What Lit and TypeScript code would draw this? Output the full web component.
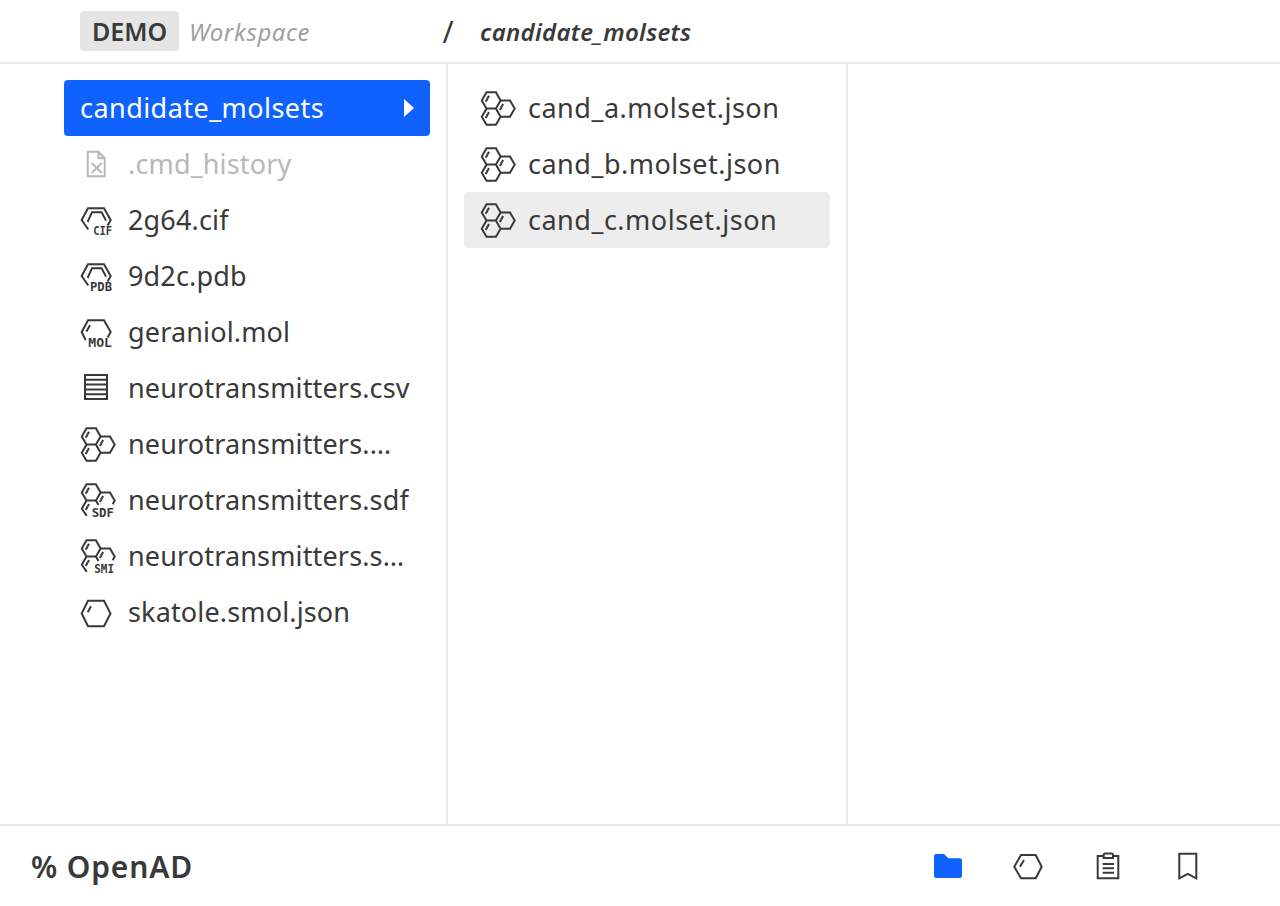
import { LitElement, html, css, svg } from "lit";
import { customElement } from "lit/decorators.js";

const R = 9.4, H = 8.14;
const hex = (cx: number, cy: number) =>
  `M${cx - R},${cy}L${cx - R / 2},${cy - H}L${cx + R / 2},${cy - H}L${cx + R},${cy}L${cx + R / 2},${cy + H}L${cx - R / 2},${cy + H}Z`;
const bond = (cx: number, cy: number) => `M${cx - 5.5},${cy + 1.3}L${cx - 2.2},${cy - 4.7}`;
const A = [13.2, 10.4], B = [27.3, 18.6], C = [13.2, 26.7];

const label = (t: string, x: number, w: number, y = 33.3) => svg`<text class="lab" x=${x} y=${y} textLength=${w} lengthAdjust="spacingAndGlyphs">${t}</text>`;
const ico = (body: unknown) => html`<svg class="ico" viewBox="0 0 36 36" width="36" height="36" fill="none" stroke="currentColor" stroke-width="2">${body}</svg>`;

const molset = svg`<path d="${hex(A[0], A[1])} ${hex(B[0], B[1])} ${hex(C[0], C[1])} ${bond(A[0], A[1])} ${bond(B[0], B[1])} ${bond(C[0], C[1])}"/>`;
const molsetCut = svg`<path d="${hex(A[0], A[1])}"/><path d="${bond(A[0], A[1])} ${bond(B[0], B[1])} ${bond(C[0], C[1])}"/><path d="M${B[0] - R / 2},${B[1] - H}H${B[0] + R / 2}L${B[0] + R},${B[1]}L${B[0] + R - 2},${B[1] + 3.6}M${B[0] - R},${B[1]}L${B[0] - R + 2.6},${B[1] + 4.4}"/><path d="M${C[0] - R + 5},${C[1] + H - 1}L${C[0] - R},${C[1]}L${C[0] - R / 2},${C[1] - H}"/>`;
const ringOpen = svg`<path d="M10.3,27.5L3.7,18L10,6.3H26L32.7,18L29.6,23.6"/><path d="M9.6,20L14,10.2H23.6L28,18.6" />`;

const icons: Record<string, unknown> = {
  cmd: ico(svg`<path d="M9.7,5.7H20.5L26.7,12.2V30.3H9.7Z M20.5,5.7V12.2H26.7"/><path d="M13.7,17L23.7,27M23.7,17L13.7,27"/>`),
  cif: ico(svg`${ringOpen}${label("CIF", 15.3, 18.7)}`),
  pdb: ico(svg`${ringOpen}${label("PDB", 12, 22)}`),
  mol: ico(svg`<path d="M7.6,26L3.7,18L10,6.3H26L32.7,18L29.6,23.6"/><path d="M8.4,17.4L12,11.2" />${label("MOL", 10.3, 23.7)}`),
  csv: ico(svg`<path d="M7,5H29V29H7Z M7,9.8H29M7,14.6H29M7,19.4H29M7,24.2H29"/>`),
  molset: ico(molset),
  sdf: ico(svg`${molsetCut}${label("SDF", 13.7, 22.3, 35)}`),
  smi: ico(svg`${molsetCut}${label("SMI", 16.3, 19.7, 35)}`),
  smol: ico(svg`<path d="M3.7,19.5L10,6.7H26L32.5,19.5L26,32.2H10Z M9.7,18.2L13,12.2"/>`),
};

const col1 = [
  ["cmd", ".cmd_history"],
  ["cif", "2g64.cif"],
  ["pdb", "9d2c.pdb"],
  ["mol", "geraniol.mol"],
  ["csv", "neurotransmitters.csv"],
  ["molset", "neurotransmitters.molset.json"],
  ["sdf", "neurotransmitters.sdf"],
  ["smi", "neurotransmitters.smiles"],
  ["smol", "skatole.smol.json"],
];
const col2 = ["cand_a.molset.json", "cand_b.molset.json", "cand_c.molset.json"];

@customElement("app-root")
export class AppRoot extends LitElement {
  static styles = css`
    :host { display: flex; flex-direction: column; height: 906px; background: #fff; color: #393939; font-family: "Noto Sans", "Liberation Sans", sans-serif; overflow: hidden; }
    header { height: 62px; flex: none; display: flex; align-items: center; border-bottom: 2px solid #eaeaea; }
    .left { width: 432px; box-sizing: border-box; padding-left: 80px; display: flex; align-items: center; gap: 10px; }
    .tag { height: 40px; width: 99px; display: flex; align-items: center; justify-content: center; background: #e5e5e5; border-radius: 4px; font-size: 25px; font-weight: 600; }
    .ws { font-size: 24px; font-style: italic; color: #a0a0a0; letter-spacing: .6px; }
    .slash { width: 32px; text-align: center; font-size: 30px; font-weight: 400; }
    .crumb { padding-left: 16px; font-size: 24px; font-weight: 600; font-style: italic; letter-spacing: .3px; }
    main { flex: 1; display: flex; min-height: 0; }
    .col { box-sizing: border-box; padding: 16px; border-right: 2px solid #eaeaea; display: flex; flex-direction: column; }
    .c1 { width: 448px; padding-left: 64px; }
    .c2 { width: 400px; }
    .row { height: 56px; flex: none; display: flex; align-items: center; gap: 14px; padding-left: 14px; border-radius: 4px; font-size: 27px; min-width: 0; }
    .name { overflow: hidden; white-space: nowrap; text-overflow: ellipsis; max-width: 286px; letter-spacing: .15px; padding-bottom: 2px; }
    .c2 .name { letter-spacing: .5px; }
    .ico { flex: none; display: block; overflow: visible; }
    .lab { font-family: "DejaVu Sans Mono", monospace; font-weight: 700; font-size: 12px; fill: currentColor; stroke: none; }
    .open { background: #0f62fe; color: #fff; padding: 0 16px; justify-content: space-between; }
    .open .name { max-width: none; letter-spacing: .45px; }
    .tri { width: 0; height: 0; border-left: 10px solid #fff; border-top: 9px solid transparent; border-bottom: 9px solid transparent; }
    .muted { color: #b8b8b8; }
    .sel { background: #ededed; }
    footer { height: 80px; flex: none; border-top: 2px solid #e5e5e5; display: flex; align-items: center; justify-content: space-between; padding: 0 52px 0 31px; }
    .brand { font-size: 30px; font-weight: 600; letter-spacing: .85px; }
    .tabs { display: flex; }
    .tab { width: 80px; height: 80px; display: flex; align-items: center; justify-content: center; }
    .tab svg { display: block; }
  `;

  render() {
    return html`
      <header>
        <div class="left"><span class="tag">DEMO</span><span class="ws">Workspace</span></div>
        <div class="slash">/</div>
        <div class="crumb">candidate_molsets</div>
      </header>
      <main>
        <div class="col c1">
          <div class="row open"><span class="name">candidate_molsets</span><span class="tri"></span></div>
          ${col1.map(([i, n]) => html`<div class="row ${i === "cmd" ? "muted" : ""}">${icons[i]}<span class="name">${n}</span></div>`)}
        </div>
        <div class="col c2">
          ${col2.map((n, i) => html`<div class="row ${i === 2 ? "sel" : ""}">${icons.molset}<span class="name">${n}</span></div>`)}
        </div>
      </main>
      <footer>
        <div class="brand">% OpenAD</div>
        <div class="tabs">
          <div class="tab"><svg width="36" height="36" viewBox="0 0 36 36"><path fill="#0f62fe" d="M4,8a2,2 0 0 1 2,-2h8l4.300,4.300H30a2,2 0 0 1 2,2V28a2,2 0 0 1 -2,2H6a2,2 0 0 1 -2,-2Z"/></svg></div>
          <div class="tab"><svg width="36" height="36" viewBox="0 0 36 36" fill="none" stroke="#393939" stroke-width="2"><path d="M4.300,18.700L11,7H25.700L31.700,18.700L25.700,30.300H11Z M10,18.700L14,12"/></svg></div>
          <div class="tab"><svg width="36" height="36" viewBox="0 0 36 36" fill="none" stroke="#393939" stroke-width="2"><path d="M13.700,8H7.700V30.300H28.300V8H23 M13.700,10V7a1.500,1.500 0 0 1 1.500,-1.500h6.300a1.500,1.500 0 0 1 1.500,1.500V10Z M12.700,16H24M12.700,20.300H24M12.700,24.700H24"/></svg></div>
          <div class="tab"><svg width="36" height="36" viewBox="0 0 36 36" fill="none" stroke="#393939" stroke-width="2"><path d="M9.300,5.700H26.300V30.300L17.800,25.800L9.300,30.300Z"/></svg></div>
        </div>
      </footer>
    `;
  }
}
